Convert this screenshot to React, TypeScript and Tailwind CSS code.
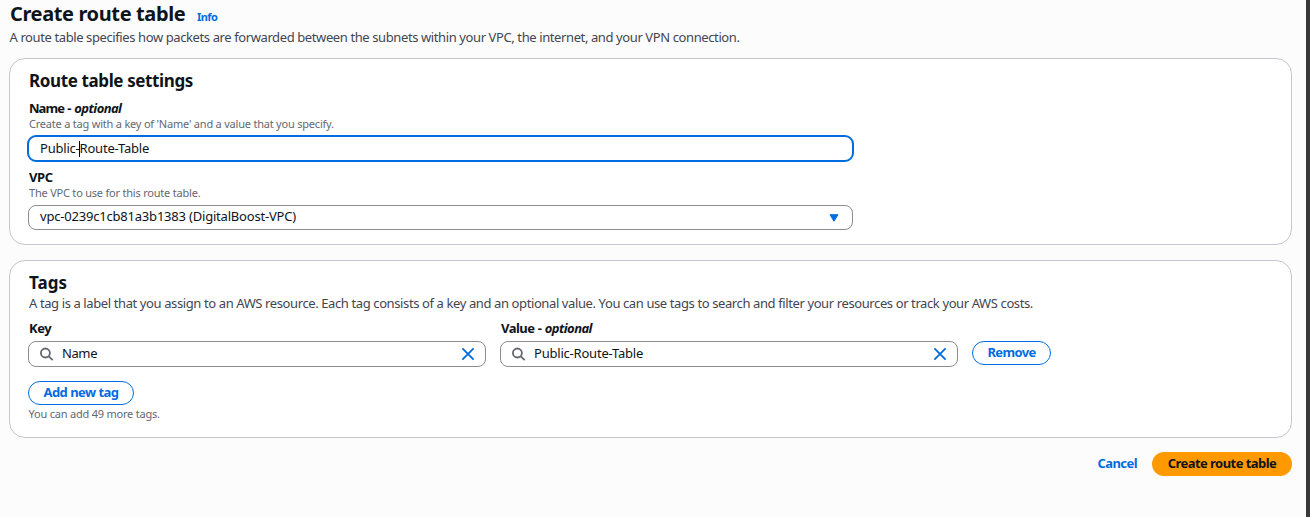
import type { ReactNode } from "react";

function Optional({ label, tracking }: { label: string; tracking: string }) {
  return (
    <div className="h-5 whitespace-pre text-[13px] leading-5 font-bold text-[#0f141a]">
      <span className={tracking}>{label}</span>
      <span className="tracking-[-0.2px]"> - </span>
      <span className="tracking-[-0.56px] italic">optional</span>
    </div>
  );
}

function Label({ children }: { children: ReactNode }) {
  return <div className="h-5 text-[13px] leading-5 font-bold tracking-[-0.42px] text-[#0f141a]">{children}</div>;
}

function Hint({ children }: { children: ReactNode }) {
  return <div className="h-4 text-[11px] leading-4 tracking-[-0.21px] text-[#656871]">{children}</div>;
}

function SearchField({ value, tracking }: { value: string; tracking: string }) {
  return (
    <div className="flex h-[26px] w-[458px] items-center rounded-lg border border-[#8c8c94] bg-white pr-[10px] pl-[11px]">
      <svg className="h-[14px] w-[14px] shrink-0" viewBox="0 0 14 14" fill="none" stroke="#656871" strokeWidth="1.8">
        <circle cx="5.4" cy="6" r="4.5" />
        <path d="M8.6 9.3 12.8 13.2" />
      </svg>
      <span className={"ml-2 flex-1 pb-[2px] text-[13px] leading-5 text-[#0f141a] " + tracking}>{value}</span>
      <svg className="h-[14px] w-[14px] shrink-0" viewBox="0 0 14 14" fill="none" stroke="#006ce0" strokeWidth="1.8">
        <path d="M1.4 1.4 12.6 12.6M12.6 1.4 1.4 12.6" />
      </svg>
    </div>
  );
}

const outline =
  "flex h-[24px] items-center justify-center whitespace-nowrap rounded-full border-[1.5px] border-[#006ce0] bg-white pb-px text-[13px] font-bold text-[#006ce0]";

export default function App() {
  return (
    <div className="flex h-[517px] w-[1310px] overflow-hidden bg-[#fcfcfd] font-['Noto_Sans','Open_Sans',sans-serif]">
      <main className="w-[1306px] shrink-0 pr-[14px] pl-[9px]">
        <header className="h-[58px] pl-px">
          <div className="flex h-[27px] items-baseline">
            <h1 className="w-[187px] whitespace-nowrap text-[20px] leading-[27px] font-bold tracking-[-0.38px] text-[#0f141a]">
              Create route table
            </h1>
            <a className="text-[11px] font-bold tracking-[-0.6px] text-[#006ce0]">Info</a>
          </div>
          <p className="-ml-[0.5px] h-5 whitespace-nowrap text-[13px] leading-5 tracking-[-0.396px] text-[#424650]">
            A route table specifies how packets are forwarded between the subnets within your VPC, the internet, and your VPN connection.
          </p>
        </header>

        <section className="h-[187px] rounded-2xl border border-[#c6c6cd] bg-white pt-[10px] pl-[18px]">
          <h2 className="h-[22px] pl-px text-[17px] leading-6 font-bold tracking-[-0.38px] text-[#0f141a]">Route table settings</h2>
          <div className="mt-[7px] pl-px">
            <Optional label="Name" tracking="tracking-[-0.95px]" />
            <div className="-mt-[2px]">
              <Hint>Create a tag with a key of &#39;Name&#39; and a value that you specify.</Hint>
            </div>
          </div>
          <div className="mt-[3px] -ml-px flex h-[27px] w-[827px] items-center rounded-[9px] border-2 border-[#006ce0] bg-white pl-[11px] text-[13px] leading-5 tracking-[-0.21px] text-[#0f141a]">
            <span className="pb-[2px]">Public-</span>
            <span className="-mx-px h-4 w-px bg-black" />
            <span className="ml-px pb-[2px]">Route-Table</span>
          </div>
          <div className="mt-[5px] pl-px">
            <Label>VPC</Label>
            <div className="-mt-[2px]">
              <Hint>The VPC to use for this route table.</Hint>
            </div>
          </div>
          <div className="mt-[4px] flex h-[25px] w-[825px] items-center justify-between rounded-lg border border-[#8c8c94] bg-white pr-[13px] pl-[11px]">
            <span className="pb-[3px] text-[13px] leading-5 tracking-[-0.2px] text-[#0f141a]">vpc-0239c1cb81a3b1383 (DigitalBoost-VPC)</span>
            <svg className="h-2 w-[10px]" viewBox="0 0 10 8">
              <path d="M1 .7H9L5 7.2Z" fill="#006ce0" stroke="#006ce0" strokeLinejoin="round" />
            </svg>
          </div>
        </section>

        <section className="mt-[15px] h-[178px] rounded-2xl border border-[#c6c6cd] bg-white pt-[10px] pl-[18px]">
          <h2 className="h-[22px] pl-px text-[17px] leading-6 font-bold text-[#0f141a]">Tags</h2>
          <p className="h-5 whitespace-nowrap pl-px text-[13px] leading-5 tracking-[-0.392px] text-[#424650]">
            A tag is a label that you assign to an AWS resource. Each tag consists of a key and an optional value. You can use tags to search and filter your resources or track your AWS costs.
          </p>
          <div className="mt-[5px] flex gap-[14px]">
            <div>
              <div className="pl-px">
                <Label>Key</Label>
              </div>
              <div className="mt-[3px]">
                <SearchField value="Name" tracking="tracking-[-0.4px]" />
              </div>
            </div>
            <div>
              <div className="pl-px">
                <Optional label="Value" tracking="tracking-[-0.52px]" />
              </div>
              <div className="mt-[3px]">
                <SearchField value="Public-Route-Table" tracking="tracking-[-0.21px]" />
              </div>
            </div>
            <button className={outline + " mt-[23px] w-[79px] tracking-[-0.66px]"}>Remove</button>
          </div>
          <button className={outline + " mt-[14px] w-[106px] tracking-[-0.53px]"}>Add new tag</button>
          <div className="mt-[1px] pl-[0.5px]">
            <Hint>You can add 49 more tags.</Hint>
          </div>
        </section>

        <footer className="mt-[14px] flex h-6 items-center justify-end gap-[15px] text-[13px] font-bold">
          <a className="pb-px tracking-[-0.57px] text-[#006ce0]">Cancel</a>
          <button className="h-6 w-[140px] whitespace-nowrap rounded-full bg-[#ff9900] pb-px tracking-[-0.55px] text-[#0f141a]">
            Create route table
          </button>
        </footer>
      </main>
      <div className="w-1 bg-[#3a3836]" />
    </div>
  );
}
